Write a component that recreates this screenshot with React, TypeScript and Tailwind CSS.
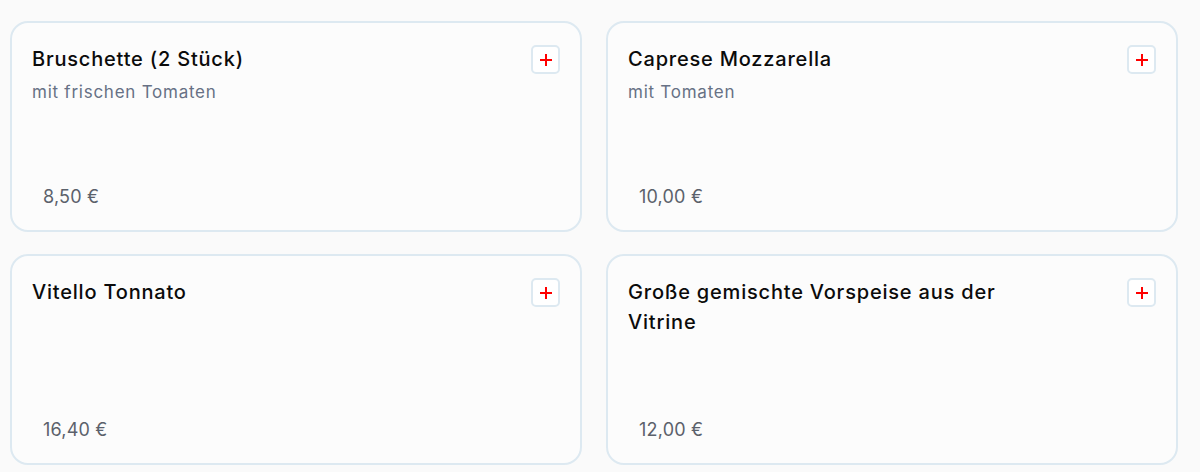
import React from "react";

const items = [
  { title: "Bruschette (2 Stück)", desc: "mit frischen Tomaten", price: "8,50 €" },
  { title: "Caprese Mozzarella", desc: "mit Tomaten", price: "10,00 €" },
  { title: "Vitello Tonnato", desc: "", price: "16,40 €" },
  { title: "Große gemischte Vorspeise aus der Vitrine", desc: "", price: "12,00 €" },
];

function Plus() {
  return (
    <button className="flex h-[29px] w-[29px] shrink-0 items-center justify-center rounded-[5px] border-2 border-[#dde9f1] bg-white">
      <svg width="14" height="14" viewBox="0 0 14 14">
        <path d="M7 1v12M1 7h12" stroke="#ff0000" strokeWidth="2" />
      </svg>
    </button>
  );
}

export default function App() {
  return (
    <div
      className="min-h-[472px] bg-[#fafafa] pl-[10px] pr-[22px] pt-[21px]"
      style={{ fontFamily: "Inter, 'Noto Sans', sans-serif" }}
    >
      <div className="grid grid-cols-2 gap-x-[24px] gap-y-[22px]">
        {items.map((it) => (
          <div
            key={it.title}
            className="flex h-[211px] flex-col rounded-[18px] border-2 border-[#dde9f1] bg-[#fcfcfc] pb-[21px] pl-[20px] pr-[20px] pt-[21px]"
          >
            <div className="flex items-start justify-between">
              <div className="max-w-[420px]">
                <div className="text-[20px] font-medium leading-[30px] tracking-[0.8px] text-[#0b0b0b]">{it.title}</div>
                {it.desc && (
                  <div className="mt-[6px] text-[17px] leading-[24px] tracking-[0.75px] text-[#677185]">{it.desc}</div>
                )}
              </div>
              <div className="pt-[1px]">
                <Plus />
              </div>
            </div>
            <div className="mt-auto pl-[11px] text-[18px] leading-[24px] tracking-[0.2px] text-[#5b616b]">{it.price}</div>
          </div>
        ))}
      </div>
    </div>
  );
}
